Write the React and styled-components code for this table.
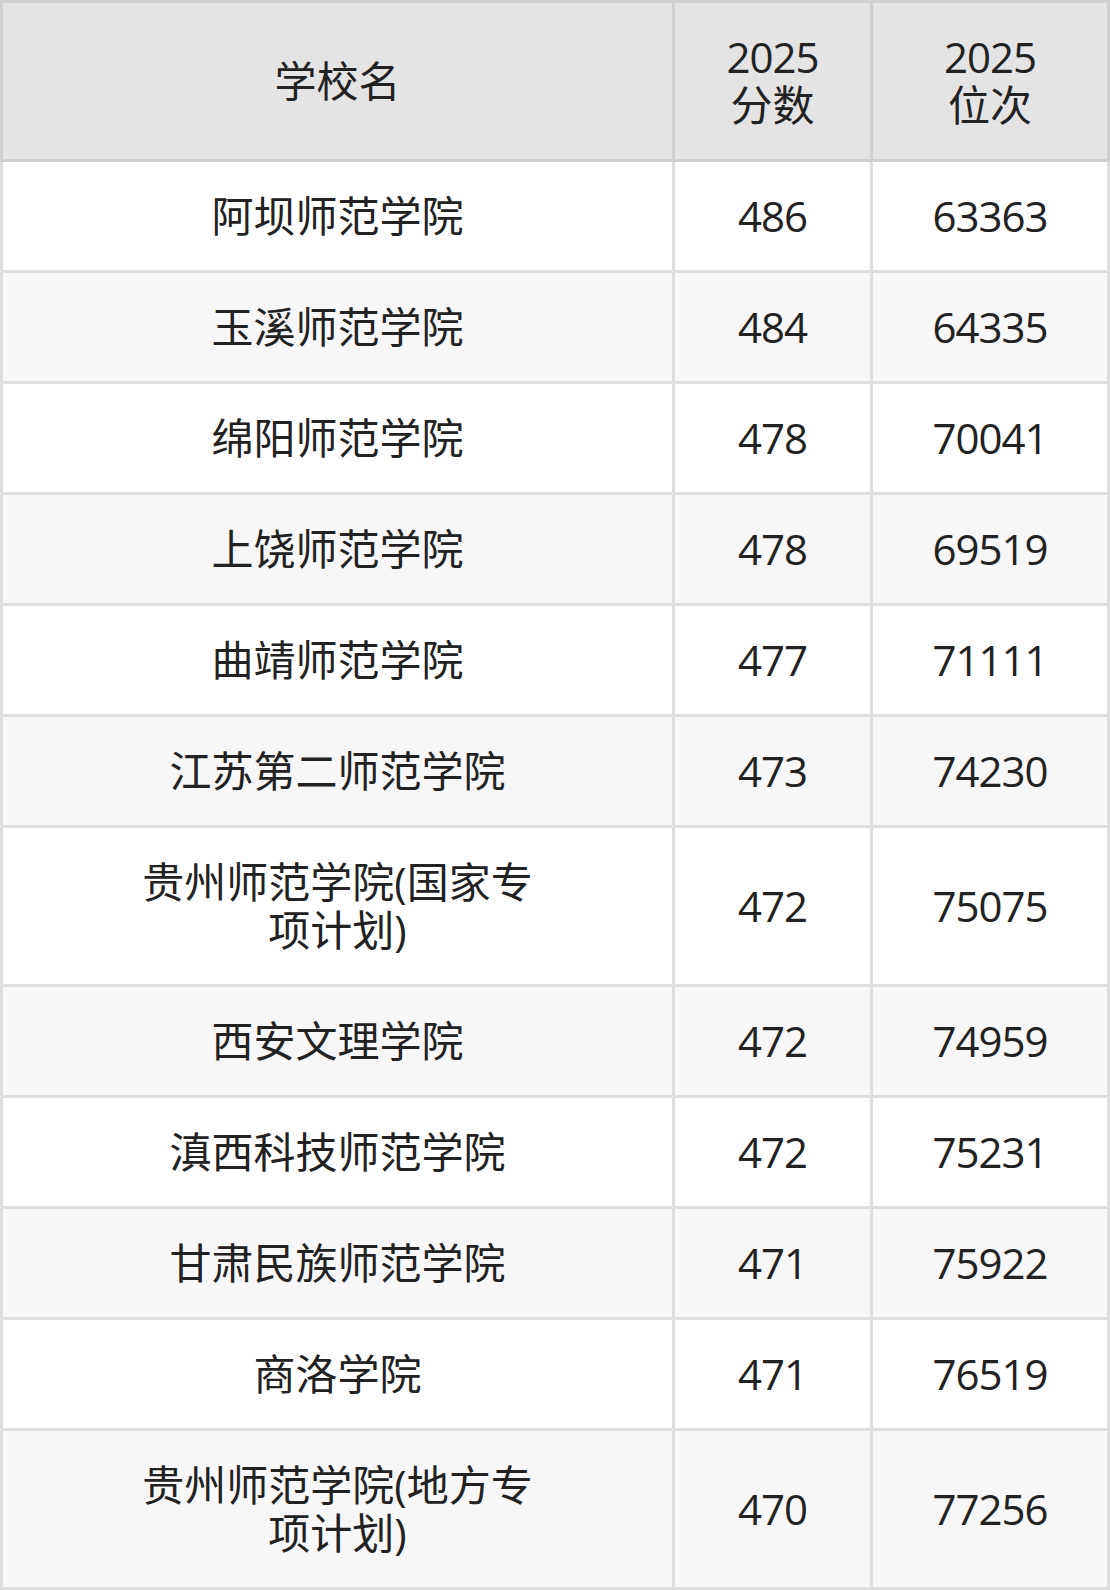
import React from 'react';
import styled, { createGlobalStyle } from 'styled-components';

const GlobalStyle = createGlobalStyle`
  html, body {
    margin: 0;
    padding: 0;
    background: #fff;
  }
  body {
    font-family: 'Open Sans', 'Noto Sans CJK SC', sans-serif;
    color: #222;
  }
`;

const Table = styled.table`
  width: 1110px;
  border-collapse: collapse;
  table-layout: fixed;
  font-size: 42px;
  line-height: 48px;
`;

const HeadCell = styled.th`
  height: 156px;
  padding: 0;
  background: #e4e4e4;
  border: 3px solid #cfcfcf;
  font-weight: 400;
  text-align: center;
  vertical-align: middle;
`;

const Year = styled.span`
  letter-spacing: -1px;
`;

const Row = styled.tr`
  background: ${(props) => (props.striped ? '#f7f7f7' : '#fff')};
`;

const Cell = styled.td`
  height: ${(props) => (props.tall ? '156px' : '108px')};
  padding: ${(props) => (props.name ? '0 125px' : '0')};
  border: 3px solid #dedede;
  text-align: center;
  vertical-align: middle;
  letter-spacing: ${(props) => (props.name ? 'normal' : '-1px')};
`;

const rows = [
  ['阿坝师范学院', '486', '63363'],
  ['玉溪师范学院', '484', '64335'],
  ['绵阳师范学院', '478', '70041'],
  ['上饶师范学院', '478', '69519'],
  ['曲靖师范学院', '477', '71111'],
  ['江苏第二师范学院', '473', '74230'],
  ['贵州师范学院(国家专项计划)', '472', '75075', true],
  ['西安文理学院', '472', '74959'],
  ['滇西科技师范学院', '472', '75231'],
  ['甘肃民族师范学院', '471', '75922'],
  ['商洛学院', '471', '76519'],
  ['贵州师范学院(地方专项计划)', '470', '77256', true],
];

const App = () => {
  return (
    <>
      <GlobalStyle />
      <Table>
        <colgroup>
          <col style={{ width: 672 }} />
          <col style={{ width: 198 }} />
          <col style={{ width: 237 }} />
        </colgroup>
        <thead>
          <tr>
            <HeadCell>学校名</HeadCell>
            <HeadCell>
              <Year>2025</Year>
              <br />
              分数
            </HeadCell>
            <HeadCell>
              <Year>2025</Year>
              <br />
              位次
            </HeadCell>
          </tr>
        </thead>
        <tbody>
          {rows.map(([name, score, rank, tall], i) => (
            <Row key={name + i} striped={i % 2 === 1}>
              <Cell name tall={tall}>
                {name}
              </Cell>
              <Cell tall={tall}>{score}</Cell>
              <Cell tall={tall}>{rank}</Cell>
            </Row>
          ))}
        </tbody>
      </Table>
    </>
  );
};

export default App;
